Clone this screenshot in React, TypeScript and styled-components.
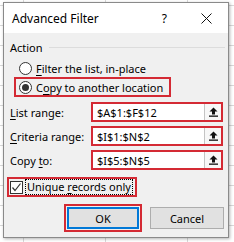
import React from 'react';
import styled, { createGlobalStyle } from 'styled-components';

const GlobalStyle = createGlobalStyle`
  html, body {
    margin: 0;
    padding: 0;
    width: 234px;
    height: 242px;
    overflow: hidden;
    background: #fff;
  }
  body {
    font-family: 'Noto Sans', 'Open Sans', 'Liberation Sans', sans-serif;
    font-size: 11px;
    color: #000;
    white-space: nowrap;
  }
`;

const RED = '#d42a34';

const Canvas = styled.div`
  width: 234px;
  height: 242px;
  box-sizing: border-box;
  padding: 2px 0 0 3px;
  background-color: #fff;
  background-image: linear-gradient(to right, #d9d9d9 1px, transparent 1px),
    linear-gradient(to bottom, #d9d9d9 1px, transparent 1px);
  background-size: 82px 100%, 100% 20px;
  background-position: 23px 0, 0 5px;
`;

const Dialog = styled.div`
  width: 226px;
  height: 236px;
  box-sizing: border-box;
  border: 1px solid #8a8a8a;
  background: #f0f0f0;
  box-shadow: 1px 1px 3px rgba(0, 0, 0, 0.3);
  display: flex;
  flex-direction: column;
`;

const TitleBar = styled.div`
  height: 30px;
  background: #fff;
  display: flex;
  align-items: center;
  padding: 0 16px 0 8px;
`;

const Title = styled.div`
  flex: 1;
  font-size: 12px;
`;

const Help = styled.span`
  font-size: 12px;
  margin-right: 34px;
`;

const Body = styled.div`
  flex: 1;
  padding: 0 3px 0 6px;
  display: flex;
  flex-direction: column;
`;

const GroupHeader = styled.div`
  margin-top: 6px;
  height: 16px;
  display: flex;
  align-items: center;
`;

const Rule = styled.div`
  flex: 1;
  height: 1px;
  background: #dcdcdc;
  margin-left: 6px;
`;

const RadioRow = styled.div<{ $boxed?: boolean }>`
  display: flex;
  align-items: center;
  box-sizing: border-box;
  ${(p) =>
    p.$boxed
      ? `
    margin-left: 4px;
    width: 157px;
    height: 20px;
    border: 2px solid ${RED};
    padding-left: 3px;
  `
      : `
    margin-top: 4px;
    height: 18px;
    padding-left: 9px;
  `}
`;

const Radio = styled.span<{ $checked?: boolean }>`
  flex: none;
  width: 13px;
  height: 13px;
  box-sizing: border-box;
  border: 1px solid #333;
  border-radius: 50%;
  background: #fff;
  margin-right: 4px;
  display: flex;
  align-items: center;
  justify-content: center;
  &::after {
    content: '';
    display: ${(p) => (p.$checked ? 'block' : 'none')};
    width: 7px;
    height: 7px;
    border-radius: 50%;
    background: #333;
  }
`;

const Key = styled.span`
  text-decoration: underline;
  text-underline-offset: 2px;
`;

const Fields = styled.div`
  margin-top: 5px;
  display: grid;
  row-gap: 4px;
`;

const FieldRow = styled.div`
  display: flex;
  align-items: center;
  height: 20px;
`;

const FieldLabel = styled.div`
  width: 81px;
`;

const Input = styled.div`
  width: 132px;
  height: 20px;
  box-sizing: border-box;
  border: 2px solid ${RED};
  background: #fff;
  display: flex;
  align-items: stretch;
`;

const Value = styled.div`
  flex: 1;
  padding-left: 4px;
  display: flex;
  align-items: center;
`;

const PickButton = styled.div`
  width: 16px;
  border-left: 1px solid #c4c4c4;
  background: #f7f7f7;
  display: flex;
  align-items: center;
  justify-content: center;
`;

const CheckRow = styled.div`
  margin-top: 7px;
  margin-left: -3px;
  width: 130px;
  height: 20px;
  box-sizing: border-box;
  border: 2px solid ${RED};
  padding-left: 1px;
  display: flex;
  align-items: center;
`;

const CheckBox = styled.span`
  flex: none;
  width: 13px;
  height: 13px;
  box-sizing: border-box;
  border: 1px solid #333;
  background: #fff;
  display: flex;
  align-items: center;
  justify-content: center;
`;

const FocusLabel = styled.span`
  margin-left: 2px;
  padding: 0 1px;
  border: 1px dotted #000;
  line-height: 14px;
`;

const ButtonRow = styled.div`
  margin-top: 7px;
  padding-right: 1px;
  display: flex;
  justify-content: flex-end;
  align-items: center;
`;

const Highlight = styled.div`
  border: 2px solid ${RED};
  padding: 1px;
`;

const Button = styled.div<{ $default?: boolean }>`
  width: ${(p) => (p.$default ? 72 : 74)}px;
  height: 22px;
  box-sizing: border-box;
  background: #e1e1e1;
  border: ${(p) => (p.$default ? '2px solid #0078d7' : '1px solid #adadad')};
  display: flex;
  align-items: center;
  justify-content: center;
  margin-left: ${(p) => (p.$default ? 0 : 8)}px;
`;

const UpIcon = () => (
  <svg width="9" height="10" viewBox="0 0 9 10">
    <polygon points="4.5,0.5 0.5,4.5 3,4.5 3,7.5 6,7.5 6,4.5 8.5,4.5" fill="#111" />
    <rect x="0" y="8.5" width="9" height="1.3" fill="#111" />
  </svg>
);

const CloseIcon = () => (
  <svg width="11" height="11" viewBox="0 0 11 11">
    <path d="M0.5 0.5 L10.5 10.5 M10.5 0.5 L0.5 10.5" stroke="#111" strokeWidth="1" />
  </svg>
);

const CheckMark = () => (
  <svg width="11" height="11" viewBox="0 0 11 11">
    <polyline points="1.5,5.5 4,8.5 9.5,1.5" fill="none" stroke="#333" strokeWidth="1.2" />
  </svg>
);

const fields = [
  { pre: '', key: 'L', post: 'ist range:', value: '$A$1:$F$12' },
  { pre: '', key: 'C', post: 'riteria range:', value: '$I$1:$N$2' },
  { pre: 'Copy ', key: 't', post: 'o:', value: '$I$5:$N$5' },
];

export default function App() {
  return (
    <Canvas>
      <GlobalStyle />
      <Dialog>
        <TitleBar>
          <Title>Advanced Filter</Title>
          <Help>?</Help>
          <CloseIcon />
        </TitleBar>
        <Body>
          <GroupHeader>
            Action
            <Rule />
          </GroupHeader>
          <RadioRow>
            <Radio />
            <span>
              <Key>F</Key>ilter the list, in-place
            </span>
          </RadioRow>
          <RadioRow $boxed>
            <Radio $checked />
            <span>
              C<Key>o</Key>py to another location
            </span>
          </RadioRow>
          <Fields>
            {fields.map((f) => (
              <FieldRow key={f.value}>
                <FieldLabel>
                  {f.pre}
                  <Key>{f.key}</Key>
                  {f.post}
                </FieldLabel>
                <Input>
                  <Value>{f.value}</Value>
                  <PickButton>
                    <UpIcon />
                  </PickButton>
                </Input>
              </FieldRow>
            ))}
          </Fields>
          <CheckRow>
            <CheckBox>
              <CheckMark />
            </CheckBox>
            <FocusLabel>
              Unique <Key>r</Key>ecords only
            </FocusLabel>
          </CheckRow>
          <ButtonRow>
            <Highlight>
              <Button $default>OK</Button>
            </Highlight>
            <Button>Cancel</Button>
          </ButtonRow>
        </Body>
      </Dialog>
    </Canvas>
  );
}
